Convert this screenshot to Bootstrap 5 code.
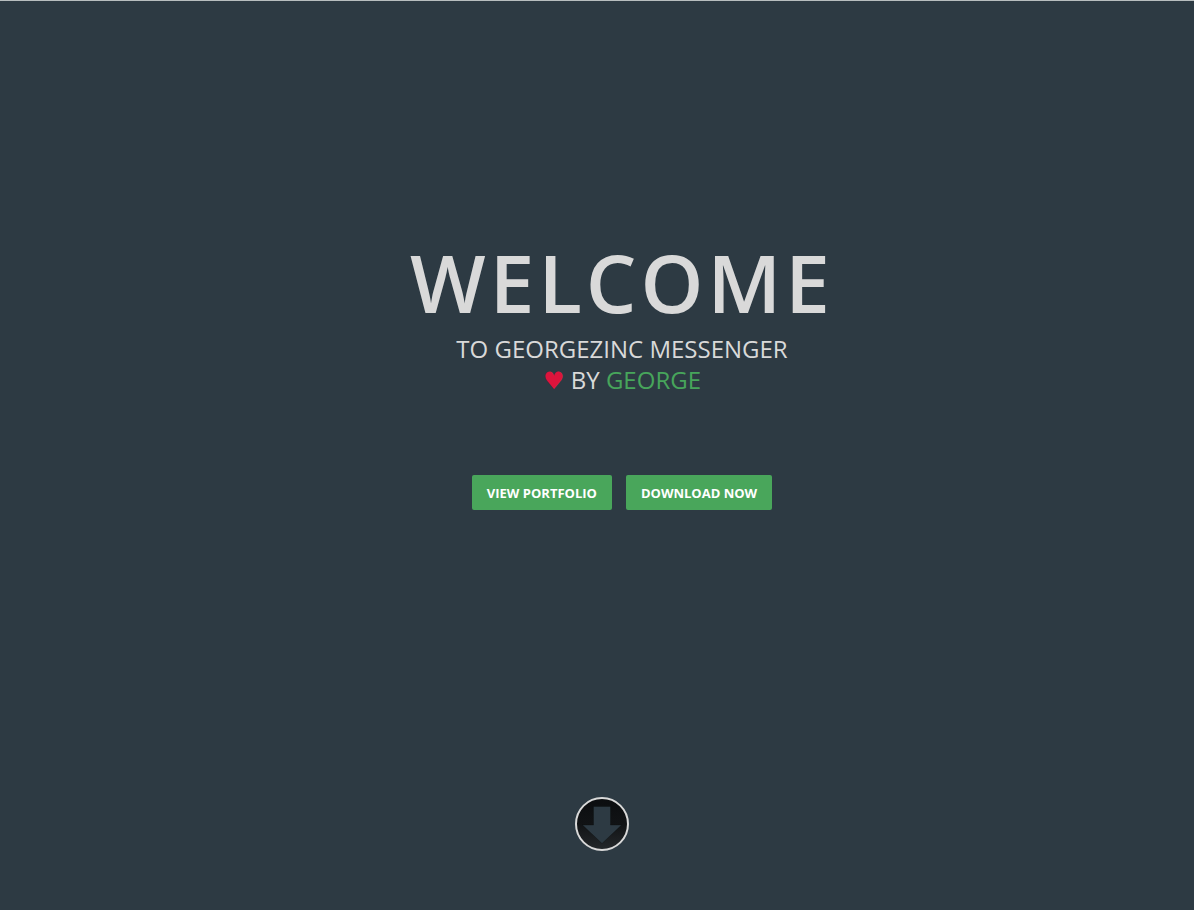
<!DOCTYPE html>
<html lang="en">
<head>
<meta charset="utf-8">
<meta name="viewport" content="width=device-width, initial-scale=1">
<title>Georgezinc Messenger</title>
<link href="https://cdn.jsdelivr.net/npm/bootstrap@5.3.0/dist/css/bootstrap.min.css" rel="stylesheet">
<style>
body { background: #2d3a43; color: #d9d9d9; font-family: "Open Sans", sans-serif; }
.intro { border-top: 1px solid #b8bebf; padding: 230px 0 59px 50px; }
.intro-title { font-size: 80px; font-weight: 600; line-height: 102px; letter-spacing: 4px; }
.intro-text { font-size: 24px; line-height: 31px; }
.heart { color: #dc143c; font-family: "DejaVu Sans", sans-serif; }
.intro-link { color: #47a55b; }
.btn-intro { --bs-btn-color: #fff; --bs-btn-bg: #49a65b; --bs-btn-hover-color: #fff; --bs-btn-hover-bg: #3b8f4b; --bs-btn-border-width: 0; --bs-btn-border-radius: 2px; --bs-btn-font-size: 13px; --bs-btn-font-weight: 700; --bs-btn-line-height: 19px; padding: 9px 15px 7px; }
.actions { gap: 14px; margin-top: 78px; }
.scroll-link { margin: auto 40px 0 0; }
</style>
</head>
<body>
<main class="intro min-vh-100 d-flex flex-column align-items-center text-center text-uppercase">
  <h1 class="intro-title mb-0">Welcome</h1>
  <p class="intro-text mb-0">to Georgezinc Messenger<br><span class="heart">♥</span> by <a class="intro-link text-decoration-none" href="#george">George</a></p>
  <div class="actions d-flex flex-wrap justify-content-center">
    <button type="button" class="btn btn-intro text-uppercase">View Portfolio</button>
    <button type="button" class="btn btn-intro text-uppercase">Download Now</button>
  </div>
  <a class="scroll-link" href="#more" aria-label="Scroll down">
    <svg class="d-block" width="54" height="54" viewBox="0 0 54 54">
      <defs><linearGradient id="disc" x1="0" y1="0" x2="0" y2="1"><stop offset="0" stop-color="#0b0d0f"/><stop offset=".5" stop-color="#111315"/><stop offset="1" stop-color="#24282b"/></linearGradient></defs>
      <circle cx="27" cy="27" r="26" fill="url(#disc)" stroke="#d9d9d9" stroke-width="2"/>
      <path d="M18.500 9.500h17V28h11L27 46.500 7.500 28h11z" fill="#2d3a43" stroke="#08090a" stroke-width=".3"/>
    </svg>
  </a>
</main>
<script src="https://cdn.jsdelivr.net/npm/bootstrap@5.3.0/dist/js/bootstrap.bundle.min.js"></script>
</body>
</html>
